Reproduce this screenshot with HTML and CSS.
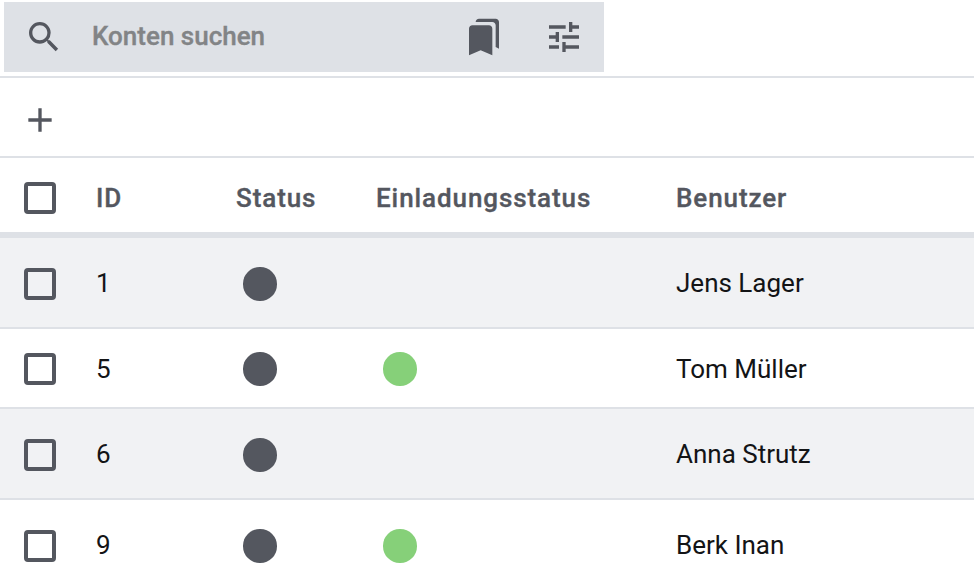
FILE: index.html
```html
<!DOCTYPE html>
<html lang="de">
<head>
<meta charset="utf-8">
<title>Konten</title>
<link rel="stylesheet" href="styles.css">
</head>
<body>
<header class="top">
  <div class="search">
    <svg class="icon" viewBox="0 0 24 24"><path d="M15.5 14h-.79l-.28-.27A6.471 6.471 0 0 0 16 9.5 6.5 6.5 0 1 0 9.5 16c1.61 0 3.09-.59 4.23-1.57l.27.28v.79l5 4.99L20.49 19l-4.99-5zm-6 0C7.01 14 5 11.99 5 9.5S7.01 5 9.5 5 14 7.01 14 9.5 11.99 14 9.5 14z"/></svg>
    <span class="placeholder">Konten suchen</span>
    <svg class="icon" viewBox="0 0 24 24"><path d="M19 18l2 1V3c0-1.1-.9-2-2-2H8.99C7.89 1 7 1.9 7 3h10c1.1 0 2 .9 2 2v13zM15 5H5c-1.1 0-2 .9-2 2v16l7-3 7 3V7c0-1.1-.9-2-2-2z"/></svg>
    <svg class="icon" viewBox="0 0 24 24"><path d="M3 17v2h6v-2H3zM3 5v2h10V5H3zm10 16v-2h8v-2h-8v-2h-2v6h2zM7 9v2H3v2h4v2h2V9H7zm14 4v-2H11v2h10zm-6-4h2V7h4V5h-4V3h-2v6z"/></svg>
  </div>
</header>
<div class="toolbar">
  <svg class="icon" viewBox="0 0 24 24"><path d="M19 13h-6v6h-2v-6H5v-2h6V5h2v6h6v2z"/></svg>
</div>
<main class="table">
  <div class="row head">
    <span class="check"></span><span>ID</span><span>Status</span><span>Einladungsstatus</span><span>Benutzer</span>
  </div>
  <div class="row shaded">
    <span class="check"></span><span>1</span><span class="dot"></span><span></span><span>Jens Lager</span>
  </div>
  <div class="row">
    <span class="check"></span><span>5</span><span class="dot"></span><span class="dot accepted"></span><span>Tom Müller</span>
  </div>
  <div class="row shaded">
    <span class="check"></span><span>6</span><span class="dot"></span><span></span><span>Anna Strutz</span>
  </div>
  <div class="row last">
    <span class="check"></span><span>9</span><span class="dot"></span><span class="dot accepted"></span><span>Berk Inan</span>
  </div>
</main>
</body>
</html>
```

FILE: styles.css
```css
* { box-sizing: border-box; }
body {
  margin: 0;
  height: 588px;
  overflow: hidden;
  background: #fff;
  color: #131416;
  font: 26px/30px Roboto, sans-serif;
}
.icon { width: 40px; height: 40px; flex: none; display: block; fill: #54575f; }
.top { height: 78px; padding: 2px 4px 0; border-bottom: 2px solid #dee1e6; }
.search {
  display: flex;
  align-items: center;
  gap: 40px;
  width: 600px;
  height: 70px;
  padding: 0 20px;
  background: #dee1e6;
}
.placeholder {
  flex: 1;
  margin: -2px 0 0 -12px;
  color: #828486;
  font-weight: 500;
  -webkit-text-stroke: 0.35px currentColor;
}
.toolbar { height: 80px; padding: 22px 20px 0; border-bottom: 2px solid #dee1e6; }
.row {
  display: grid;
  grid-template-columns: 72px 140px 140px 300px 1fr;
  align-items: center;
  height: 80px;
  padding: 2px 0 0 24px;
  border-bottom: 2px solid #dee1e6;
}
.row > span:not(.check):not(.dot) { margin-top: -1px; }
.head {
  padding-top: 6px;
  border-bottom-width: 6px;
  color: #54575f;
  font-weight: 500;
  letter-spacing: 0.91px;
  -webkit-text-stroke: 0.35px currentColor;
}
.shaded { height: 91px; padding-top: 3px; background: #f1f2f4; }
.last { height: 88px; padding-top: 4px; border-bottom: 0; }
.shaded > span:not(.check):not(.dot),
.last > span:not(.check):not(.dot) { margin-top: -2px; }
.row.shaded > span:not(.check):not(.dot),
.row.last > span:not(.check):not(.dot) { margin-top: -2px; }
.check { width: 32px; height: 32px; border: 4px solid #54575f; border-radius: 4px; }
.dot { width: 33.4px; height: 33.4px; margin-left: 7.3px; border-radius: 50%; background: #54575f; }
.accepted { background: #86d079; }
```
